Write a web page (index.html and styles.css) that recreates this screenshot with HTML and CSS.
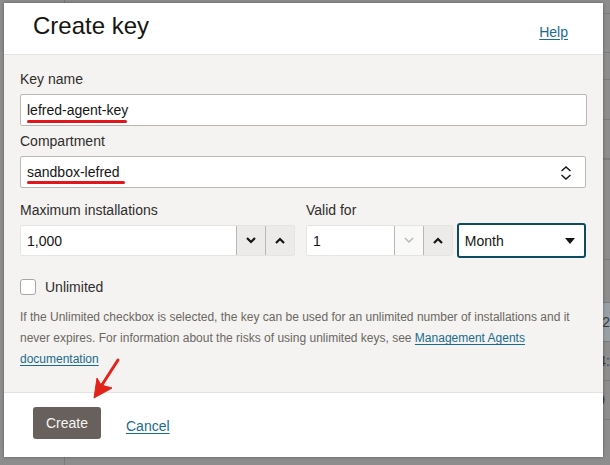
FILE: index.html
```html
<!DOCTYPE html>
<html lang="en">
<head>
    <meta charset="UTF-8">
    <meta name="viewport" content="width=device-width, initial-scale=1.0">
    <title>Create key</title>

    <link rel="stylesheet" href="styles.css">
</head>
<body>
    <div class="app">
        <div class="nav"></div>
        <div class="table">
            <div class="row h14"></div>
            <div class="row h39"></div>
            <div class="row h27"></div>
            <div class="row h40"></div>
            <div class="row h40 thick"></div>
            <div class="row h100"></div>
            <div class="row h43"></div>
            <div class="row h39 selected"><span class="cell c1">12</span></div>
            <div class="row h39"><span class="cell c2">14:</span></div>
            <div class="row h39"><span class="cell c3">39</span></div>
        </div>
    </div>

    <div class="dialog">
        <div class="dialog-header">
            <h1>Create key</h1>
            <a href="#" class="link help">Help</a>
        </div>

        <div class="dialog-body">
            <div class="field">
                <label>Key name</label>
                <div class="input">
                    lefred-agent-key
                    <span class="mark mark-key"></span>
                </div>
            </div>
            <div class="field">
                <label>Compartment</label>
                <div class="input select">
                    sandbox-lefred
                    <span class="mark mark-comp"></span>
                    <svg class="updown" width="12" height="14" viewBox="0 0 12 14">
                        <polyline points="1.5,5 6,1 10.5,5" />
                        <polyline points="1.5,9 6,13 10.5,9" />
                    </svg>
                </div>
            </div>

            <div class="row-fields">
                <div class="field col-left">
                    <label>Maximum installations</label>
                    <div class="spin">
                        <div class="spin-value">1,000</div>
                        <div class="spin-btn">
                            <svg width="10" height="7" viewBox="0 0 10 7"><polyline points="1,1 5,5 9,1" /></svg>
                        </div>
                        <div class="spin-btn">
                            <svg width="10" height="7" viewBox="0 0 10 7"><polyline points="1,6 5,2 9,6" /></svg>
                        </div>
                    </div>
                </div>
                <div class="field col-right">
                    <label>Valid for</label>
                    <div class="valid">
                        <div class="spin spin-small">
                            <div class="spin-value">1</div>
                            <div class="spin-btn disabled">
                                <svg width="10" height="7" viewBox="0 0 10 7"><polyline points="1,1 5,5 9,1" /></svg>
                            </div>
                            <div class="spin-btn">
                                <svg width="10" height="7" viewBox="0 0 10 7"><polyline points="1,6 5,2 9,6" /></svg>
                            </div>
                        </div>
                        <div class="unit">
                            Month
                            <svg width="10" height="6" viewBox="0 0 10 6"><polygon points="0,0 10,0 5,6" /></svg>
                        </div>
                    </div>
                </div>
            </div>

            <div class="check">
                <span class="box"></span>
                <span>Unlimited</span>
            </div>

            <p class="hint">If the Unlimited checkbox is selected, the key can be used for an unlimited number of installations and it never expires. For information about the risks of using unlimited keys, see <a href="#" class="link">Management Agents documentation</a></p>
        </div>

        <div class="dialog-footer">
            <button class="btn">Create</button>
            <a href="#" class="link">Cancel</a>
        </div>

        <svg class="arrow" width="36" height="48" viewBox="0 0 36 48">
            <line x1="30" y1="5" x2="12" y2="33" />
            <polygon points="6,43 9,23 13,30 24,33" />
        </svg>
    </div>
</body>
</html>
```

FILE: styles.css
```css
* {
    box-sizing: border-box;
}
body {
    margin: 0;
    font-family: "Liberation Sans", Arial, sans-serif;
    color: #161513;
}
.app {
    display: flex;
    height: 465px;
    background-color: #8d8d8d;
}
.nav {
    width: 67px;
    border-right: 1px solid #7a7a7a;
}
.table {
    flex: 1;
    display: flex;
    flex-direction: column;
    .row {
        border-bottom: 1px solid #7c7c7c;
        font-size: 14px;
        line-height: 38px;
        color: #3b3b3b;
        white-space: nowrap;
        overflow: hidden;
    }
    .thick {
        border-bottom-width: 2px;
    }
    .selected {
        background-color: #99a0a5;
    }
    .h14 { height: 14px; }
    .h27 { height: 27px; }
    .h39 { height: 39px; }
    .h40 { height: 40px; }
    .h43 { height: 43px; }
    .h100 { height: 100px; }
    .c1 { padding-left: 529px; }
    .c2 { padding-left: 525px; }
    .c3 { padding-left: 524px; }
}

.dialog {
    position: absolute;
    left: 4px;
    top: 3px;
    width: 599px;
    height: 454px;
    display: flex;
    flex-direction: column;
    background-color: #f4f3f1;
    box-shadow: 0 0 3px rgba(0, 0, 0, .35);
}
.dialog-header {
    height: 52px;
    flex-shrink: 0;
    display: flex;
    justify-content: space-between;
    align-items: flex-start;
    padding: 9px 35px 0 29px;
    background-color: #fff;
    border-bottom: 1px solid #e4e2df;
    h1 {
        margin: 0;
        font-size: 24px;
        line-height: 28px;
        font-weight: normal;
        color: #161513;
    }
}
.link {
    color: #1a6b8c;
    text-decoration: underline;
    text-underline-offset: 2px;
}
.help {
    margin-top: 10px;
    font-size: 14px;
    line-height: 20px;
}

.dialog-body {
    flex: 1;
    padding: 14px 16px 0 16px;
    display: flex;
    flex-direction: column;
}
.field {
    display: flex;
    flex-direction: column;
    gap: 5px;
    margin-bottom: 5px;
    label {
        font-size: 14px;
        line-height: 20px;
        color: #2f2d2b;
    }
}
.input {
    position: relative;
    display: flex;
    align-items: center;
    height: 32px;
    padding: 0 6px;
    background-color: #fff;
    border: 1px solid #bcb7b2;
    border-radius: 2px;
    font-size: 14px;
}
.select {
    width: 566px;
    height: 32px;
    .updown {
        position: absolute;
        right: 13px;
        top: 9px;
        fill: none;
        stroke: #161513;
        stroke-width: 1.5;
    }
}
.mark {
    position: absolute;
    left: 6px;
    height: 3.5px;
    border-radius: 2px;
    background-color: #e3161b;
}
.mark-key {
    width: 100px;
    bottom: 2px;
}
.mark-comp {
    width: 98px;
    bottom: 3px;
}

.row-fields {
    display: flex;
    gap: 11px;
    margin-top: 7px;
    .field {
        margin-bottom: 0;
    }
}
.col-left {
    width: 275px;
}
.col-right {
    width: 280px;
}
.valid {
    display: flex;
    align-items: center;
    gap: 4px;
}
.spin {
    display: flex;
    height: 31px;
    background-color: #fff;
    border: 1px solid #e6e4e1;
    border-radius: 2px;
    font-size: 14px;
}
.spin-value {
    flex: 1;
    display: flex;
    align-items: center;
    padding: 0 6px;
}
.spin-btn {
    width: 29px;
    display: flex;
    align-items: center;
    justify-content: center;
    background-color: #ecebea;
    border-left: 1px solid #b9b6b3;
    svg {
        fill: none;
        stroke: #161513;
        stroke-width: 2.2;
    }
}
.spin-btn.disabled {
    background-color: #f9f9f8;
    svg {
        stroke: #b8b5b2;
        stroke-width: 1.4;
    }
}
.spin-small {
    width: 148px;
}
.unit {
    width: 130px;
    height: 35px;
    margin: -2px 0;
    display: flex;
    align-items: center;
    justify-content: space-between;
    padding: 0 9px 0 6px;
    background-color: #fff;
    border: 2px solid #0f4b5f;
    border-radius: 3px;
    font-size: 14px;
    svg {
        fill: #161513;
    }
}

.check {
    display: flex;
    align-items: center;
    gap: 9px;
    margin-top: 21px;
    font-size: 14px;
    line-height: 20px;
    color: #2f2d2b;
    .box {
        width: 16px;
        height: 16px;
        background-color: #fff;
        border: 1px solid #aaa5a0;
        border-radius: 3px;
    }
}
.hint {
    margin: 10px 0 0 0;
    font-size: 12px;
    line-height: 21px;
    color: #6b6762;
}

.dialog-footer {
    height: 65px;
    flex-shrink: 0;
    display: flex;
    align-items: flex-start;
    gap: 25px;
    padding: 14px 29px 0 29px;
    background-color: #fff;
    border-top: 1px solid #e4e2df;
    .link {
        margin-top: 9px;
        font-size: 14px;
        line-height: 20px;
    }
}
.btn {
    width: 68px;
    height: 32px;
    border: none;
    border-radius: 3px;
    background-color: #67605c;
    color: #f6f5f3;
    font-family: inherit;
    font-size: 14px;
}

.arrow {
    position: absolute;
    left: 84px;
    top: 352px;
    line {
        stroke: #e2231a;
        stroke-width: 3;
        stroke-linecap: round;
    }
    polygon {
        fill: #e2231a;
        stroke: #e2231a;
        stroke-width: 1;
        stroke-linejoin: round;
    }
}
```
